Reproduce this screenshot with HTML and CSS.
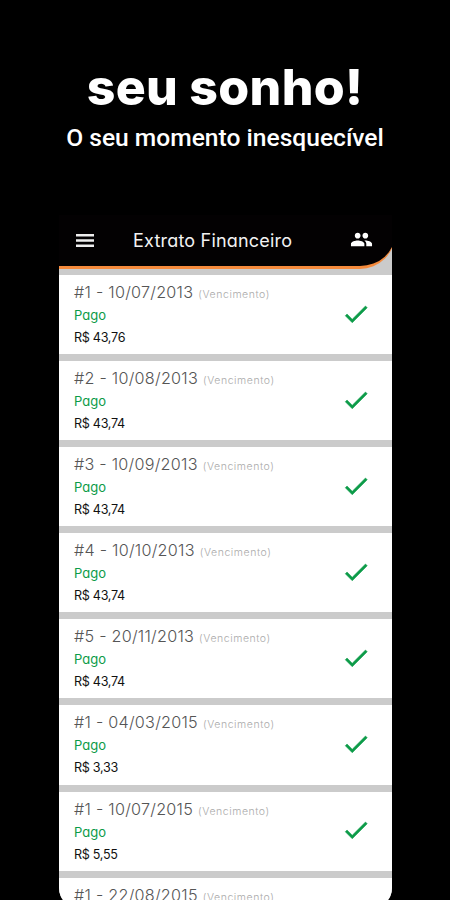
FILE: index.html
```html
<!DOCTYPE html>
<html lang="pt-BR">
<head>
    <meta charset="UTF-8">
    <meta name="viewport" content="width=device-width, initial-scale=1.0">
    <title>Extrato Financeiro</title>
    <link rel="stylesheet" href="styles.css">
</head>
<body>
    <svg class="symbols" width="0" height="0">
        <symbol id="check" viewBox="0 0 24 24">
            <path d="M9 16.17L4.83 12l-1.42 1.41L9 19 21 7l-1.41-1.41z"/>
        </symbol>
    </svg>

    <div class="promo">
        <h1>seu sonho!</h1>
        <p>O seu momento inesquecível</p>
    </div>

    <div class="phone">
        <header>
            <svg class="menu" viewBox="0 0 18 13"><path d="M0 0h18v2.6H0zM0 5.2h18v2.6H0zM0 10.4h18V13H0z"/></svg>
            <h2>Extrato Financeiro</h2>
            <svg class="people" viewBox="0 0 24 24"><path d="M16 11c1.66 0 2.99-1.34 2.99-3S17.660 5 16 5s-3 1.340-3 3 1.340 3 3 3zm-8 0c1.660 0 2.990-1.340 2.990-3S9.660 5 8 5 5 6.340 5 8s1.340 3 3 3zm0 2c-2.330 0-7 1.170-7 3.500V19h14v-2.500c0-2.330-4.670-3.500-7-3.500zm8 0c-.29 0-.62.02-.97.05 1.160.84 1.970 1.970 1.970 3.450V19h6v-2.500c0-2.330-4.670-3.500-7-3.500z"/></svg>
        </header>

        <main>
            <div class="card">
                <div class="info">
                    <h3>#1 - 10/07/2013</h3><small>(Vencimento)</small>
                    <p class="status">Pago</p>
                    <p class="value">R$ 43,76</p>
                </div>
                <svg class="check"><use href="#check"/></svg>
            </div>
            <div class="card">
                <div class="info">
                    <h3>#2 - 10/08/2013</h3><small>(Vencimento)</small>
                    <p class="status">Pago</p>
                    <p class="value">R$ 43,74</p>
                </div>
                <svg class="check"><use href="#check"/></svg>
            </div>
            <div class="card">
                <div class="info">
                    <h3>#3 - 10/09/2013</h3><small>(Vencimento)</small>
                    <p class="status">Pago</p>
                    <p class="value">R$ 43,74</p>
                </div>
                <svg class="check"><use href="#check"/></svg>
            </div>
            <div class="card">
                <div class="info">
                    <h3>#4 - 10/10/2013</h3><small>(Vencimento)</small>
                    <p class="status">Pago</p>
                    <p class="value">R$ 43,74</p>
                </div>
                <svg class="check"><use href="#check"/></svg>
            </div>
            <div class="card">
                <div class="info">
                    <h3>#5 - 20/11/2013</h3><small>(Vencimento)</small>
                    <p class="status">Pago</p>
                    <p class="value">R$ 43,74</p>
                </div>
                <svg class="check"><use href="#check"/></svg>
            </div>
            <div class="card">
                <div class="info">
                    <h3>#1 - 04/03/2015</h3><small>(Vencimento)</small>
                    <p class="status">Pago</p>
                    <p class="value">R$ 3,33</p>
                </div>
                <svg class="check"><use href="#check"/></svg>
            </div>
            <div class="card">
                <div class="info">
                    <h3>#1 - 10/07/2015</h3><small>(Vencimento)</small>
                    <p class="status">Pago</p>
                    <p class="value">R$ 5,55</p>
                </div>
                <svg class="check"><use href="#check"/></svg>
            </div>
            <div class="card">
                <div class="info">
                    <h3>#1 - 22/08/2015</h3><small>(Vencimento)</small>
                </div>
            </div>
        </main>
    </div>
</body>
</html>
```
FILE: styles.css
```css
:root {
    --green: #0c9b48;
    --orange: #f58a3c;
    --gap-color: #cbcbcb;
}

* {
    box-sizing: border-box;
    margin: 0;
    padding: 0;
}

body {
    background-color: #000;
    font-family: 'Inter', sans-serif;
    font-feature-settings: 'cv11';
    height: 900px;
    overflow: hidden;
}

.symbols {
    display: block;
}

.promo {
    height: 215px;
    padding-top: 57px;
    text-align: center;
    color: #fff;
}

.promo h1 {
    font-size: 50px;
    font-weight: 800;
    line-height: 60px;
    letter-spacing: 0.3px;
    white-space: nowrap;
}

.promo p {
    font-family: 'Roboto', sans-serif;
    font-size: 24.6px;
    font-weight: 500;
    line-height: 41px;
    white-space: nowrap;
}

.phone {
    width: 333px;
    height: 693px;
    margin-left: 59px;
    background-color: var(--gap-color);
    border-radius: 0 0 20px 20px;
    overflow: hidden;
}

header {
    width: 336px;
    height: 54px;
    display: flex;
    align-items: center;
    padding: 0 22px 0 17px;
    background-color: #030102;
    border-bottom: 3px solid var(--orange);
    border-bottom-right-radius: 35px;
}

.menu {
    width: 18px;
    height: 13px;
    fill: #eee;
}

header h2 {
    flex: 1;
    margin-left: 39px;
    color: #f2f2f2;
    font-size: 18px;
    font-weight: 400;
    letter-spacing: 0.2px;
    white-space: nowrap;
}

.people {
    width: 23px;
    height: 23px;
    margin-bottom: 2px;
    fill: #fff;
}

main {
    display: flex;
    flex-direction: column;
    gap: 7px;
    padding-top: 6px;
}

.card {
    display: flex;
    flex: none;
    align-items: center;
    justify-content: space-between;
    height: 79.1px;
    padding: 0 21px 0 15px;
    background-color: #fff;
}

.info {
    height: 100%;
    padding-top: 6px;
    white-space: nowrap;
}

.info h3 {
    display: inline-block;
    color: #555;
    font-size: 16.2px;
    font-weight: 300;
    line-height: 22px;
    letter-spacing: 0.25px;
}

.info small {
    margin-left: 5px;
    color: #aaa;
    font-size: 10.5px;
    font-weight: 300;
    letter-spacing: 0.55px;
}

.status {
    color: var(--green);
    font-size: 13px;
    line-height: 25px;
}

.value {
    color: #111;
    font-size: 12.6px;
    line-height: 20px;
    letter-spacing: -0.3px;
}

.check {
    width: 30px;
    height: 30px;
    margin-bottom: 2px;
    fill: var(--green);
    stroke: var(--green);
    stroke-width: 0.4px;
}
```
